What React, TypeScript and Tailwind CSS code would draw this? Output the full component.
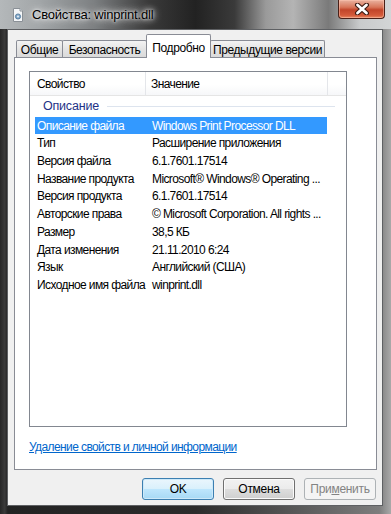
import React from "react";

const rows: [string, string][] = [
  ["Тип", "Расширение приложения"],
  ["Версия файла", "6.1.7601.17514"],
  ["Название продукта", "Microsoft® Windows® Operating ..."],
  ["Версия продукта", "6.1.7601.17514"],
  ["Авторские права", "© Microsoft Corporation. All rights ..."],
  ["Размер", "38,5 КБ"],
  ["Дата изменения", "21.11.2010 6:24"],
  ["Язык", "Английский (США)"],
  ["Исходное имя файла", "winprint.dll"],
];

const tabs = ["Общие", "Безопасность", "Подробно", "Предыдущие версии"];
const tabWidths = ["w-[47px]", "w-[85px]", "w-[65px]", "w-[115px]"];

function FileIcon() {
  return (
    <svg width="12" height="14" viewBox="0 0 12 14">
      <path d="M1.5 0.5 H8 L10.5 3 V13.5 H1.5 Z" fill="#f4f6f8" stroke="#8a9096" />
      <path d="M8 0.5 V3 H10.5" fill="#dde2e6" stroke="#8a9096" />
      <circle cx="6" cy="8.5" r="2.6" fill="#7fa6c8" stroke="#4d7395" strokeWidth="0.8" />
      <circle cx="6" cy="8.5" r="0.9" fill="#f4f6f8" />
    </svg>
  );
}

function CloseGlyph() {
  return (
    <svg width="16" height="12" viewBox="0 0 16 12">
      <path d="M3.5 2 L12.5 10 M12.5 2 L3.5 10" stroke="#3b1a12" strokeWidth="5" strokeLinecap="round" />
      <path d="M3.5 2 L12.5 10 M12.5 2 L3.5 10" stroke="#ffffff" strokeWidth="2.8" strokeLinecap="round" />
    </svg>
  );
}

export default function App() {
  return (
    <div className="relative w-[391px] h-[514px] overflow-hidden flex flex-col bg-[linear-gradient(90deg,#262626_0%,#3a3a3a_1.2%,#222_2%,#2c2c2c_50%,#7d7d7d_97%,#a9a9a9_100%)] font-['Liberation_Sans',Arial,sans-serif] text-[12px] tracking-[-0.6px] text-black whitespace-nowrap">
      {/* title bar */}
      <div className="h-[29px] shrink-0 flex items-center pl-[12px] bg-[linear-gradient(90deg,#b4b8ba_0%,#a2a6a8_10%,#7d8082_24%,#3a3a3a_38%,#222222_50%,#3a3a3a_60%,#9a9a9a_68%,#b4b4b4_75%,#7a7a7a_84%,#c9cbcc_92%,#d3d5d6_100%)]">
        <FileIcon />
        <span className="ml-[8px] text-[13px] tracking-[-0.2px] [text-shadow:0_0_6px_#eeeeee,0_0_10px_#dddddd,0_0_3px_#ffffff]">
          Свойства: winprint.dll
        </span>
      </div>
      <div className="absolute top-0 right-[6px] w-[47px] h-[19px] rounded-b-[4px] border border-t-0 border-[#4a2018] bg-[linear-gradient(180deg,#eab3a0_0%,#d8765a_40%,#c2452a_55%,#d45a3a_85%,#e88a64_100%)] flex items-center justify-center shadow-[inset_0_0_0_1px_rgba(255,200,180,0.5)]">
        <CloseGlyph />
      </div>

      {/* client */}
      <div className="ml-[7px] w-[376px] h-[477px] bg-[#f0f0f0] border border-[#5e6063] flex flex-col pt-[4px] pl-[6px]">
        {/* tabs */}
        <div className="relative z-10 h-[23px] flex items-end pl-[2px] tracking-[-0.4px]">
          {tabs.map((t, i) =>
            i === 2 ? (
              <div
                key={t}
                className={`${tabWidths[i]} -ml-px h-[24px] mb-[-1px] relative z-10 bg-white border border-b-0 border-[#898c95] rounded-t-[2px] flex items-center justify-center pt-[3px]`}
              >
                {t}
              </div>
            ) : (
              <div
                key={t}
                className={`${tabWidths[i]} ${i === 0 ? "" : "-ml-px"} h-[17px] bg-[linear-gradient(180deg,#f3f3f3,#e4e4e4_50%,#dadada)] border border-b-0 border-[#898c95] rounded-t-[2px] flex items-center justify-center pt-[2px]`}
              >
                {t}
              </div>
            )
          )}
        </div>

        {/* panel */}
        <div className="w-[363px] h-[413px] bg-white border border-[#898c95] pt-[13px] pl-[14px] flex flex-col">
          <div className="w-[318px] h-[356px] border border-[#828790] flex flex-col">
            {/* header */}
            <div className="h-[24px] shrink-0 flex border-b border-[#e5e5e5] bg-[linear-gradient(180deg,#ffffff_0%,#ffffff_55%,#f6f7f9_100%)]">
              <div className="w-[116px] pl-[7px] flex items-center border-r border-[#e4e6ea]">Свойство</div>
              <div className="w-[182px] pl-[5px] flex items-center border-r border-[#e4e6ea]">Значение</div>
            </div>
            {/* group */}
            <div className="h-[21px] shrink-0 flex items-center pl-[13px] pr-[11px]">
              <span className="text-[#1e3287] text-[12.5px] tracking-[-0.2px]">Описание</span>
              <div className="flex-1 ml-[8px] h-px bg-[#dde4ee]" />
            </div>
            {/* rows */}
            <div className="flex flex-col pl-[5px]">
              <div className="w-[292px] h-[17px] flex items-center bg-[#3399ff] text-white">
                <div className="w-[117px] pl-[2px]">Описание файла</div>
                <div>Windows Print Processor DLL</div>
              </div>
              {rows.map(([k, v]) => (
                <div key={k} className="w-[292px] h-[17.8px] flex items-center">
                  <div className="w-[117px] shrink-0 pl-[2px]">{k}</div>
                  <div>{v}</div>
                </div>
              ))}
            </div>
          </div>
          <div className="mt-[11px] text-[#0066cc] underline tracking-[-0.6px]">
            Удаление свойств и личной информации
          </div>
        </div>

        {/* buttons */}
        <div className="flex justify-end gap-[9px] pr-[6px] mt-[8px] tracking-[-0.3px]">
          <div className="w-[72px] h-[22px] rounded-[3px] border border-[#3c7fb1] bg-[linear-gradient(180deg,#eaf6fd_0%,#d9f0fc_50%,#bee6fd_51%,#a7d9f5_100%)] shadow-[inset_0_0_0_1px_#cde9f9] flex items-center justify-center">
            OK
          </div>
          <div className="w-[72px] h-[22px] rounded-[3px] border border-[#707070] bg-[linear-gradient(180deg,#f2f2f2_0%,#ebebeb_50%,#dddddd_51%,#cfcfcf_100%)] shadow-[inset_0_0_0_1px_#fbfbfb] flex items-center justify-center">
            Отмена
          </div>
          <div className="w-[72px] h-[22px] rounded-[3px] border border-[#adb2b5] bg-[#f4f4f4] text-[#838383] flex items-center justify-center">
            <span>
              При<span className="underline">м</span>енить
            </span>
          </div>
        </div>
      </div>
    </div>
  );
}
